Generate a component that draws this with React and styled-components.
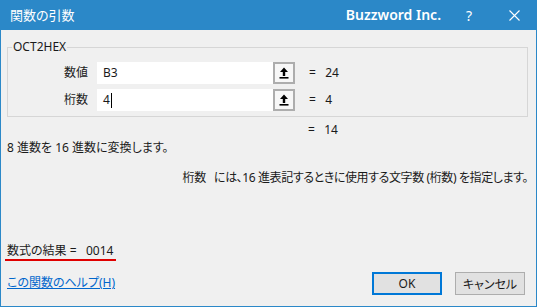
import React from "react";
import styled, { createGlobalStyle } from "styled-components";

const Global = createGlobalStyle`
  html, body { margin: 0; padding: 0; background: #f0f0f0; }
  body {
    font-family: "Noto Sans", "Noto Sans CJK JP", sans-serif;
    font-size: 12px;
    color: #1a1a1a;
    font-feature-settings: "palt";
  }
  * { box-sizing: border-box; }
`;

const BLUE = "#2b88c8";

const Window = styled.div`
  width: 537px;
  height: 307px;
  display: flex;
  flex-direction: column;
  border: 1px solid ${BLUE};
  border-top: none;
  background: #f0f0f0;
`;

const TitleBar = styled.div`
  height: 30px;
  margin: 0 -1px;
  background: ${BLUE};
  color: #fff;
  display: flex;
  align-items: center;
  padding-left: 10px;
  flex-shrink: 0;
`;

const Title = styled.div`
  font-family: "Noto Sans CJK JP", sans-serif;
  font-size: 13px;
  line-height: 16px;
  flex: 1;
`;

const Brand = styled.div`
  font-family: "Noto Sans", sans-serif;
  font-weight: 600;
  font-size: 14px;
  line-height: 18px;
  margin-right: 6px;
`;

const TitleButton = styled.div`
  width: ${(p) => p.$w || 46}px;
  height: 30px;
  display: flex;
  align-items: center;
  justify-content: center;
  font-size: 14px;
  font-family: "Noto Sans", sans-serif;
`;

const Body = styled.div`
  flex: 1;
  display: flex;
  flex-direction: column;
  padding: 9px 8px 0 6px;
`;

const Group = styled.fieldset`
  margin: 0;
  border: 1px solid #d6d6d6;
  padding: 7px 0 5px 0;
  display: flex;
  flex-direction: column;
  gap: 5px;
`;

const Legend = styled.legend`
  font-size: 12px;
  line-height: 16px;
  padding: 0 1px;
  margin-left: 4px;
`;

const Row = styled.div`
  display: flex;
  align-items: center;
  height: 22px;
`;

const Label = styled.div`
  width: 80px;
  text-align: right;
  margin-right: 9px;
  line-height: 16px;
`;

const Input = styled.div`
  width: 176px;
  height: 22px;
  background: #fff;
  display: flex;
  align-items: center;
  padding-left: 6px;
  line-height: 16px;
`;

const Caret = styled.span`
  display: inline-block;
  width: 1px;
  height: 15px;
  background: #000;
  margin-left: 1px;
`;

const RefButton = styled.div`
  width: 22px;
  height: 22px;
  border: 2px solid #adadad;
  background: #f7f7f7;
  display: flex;
  align-items: center;
  justify-content: center;
`;

const Eq = styled.div`
  margin-left: 14px;
  line-height: 16px;
  white-space: pre;
`;

const ResultLine = styled.div`
  margin-top: 5px;
  padding-left: 301px;
  line-height: 16px;
  white-space: pre;
`;

const Text = styled.div`
  margin-top: ${(p) => p.$mt || 0}px;
  line-height: 16px;
  white-space: pre;
  text-align: ${(p) => p.$align || "left"};
  letter-spacing: ${(p) => p.$ls || 0}px;
`;

const Bottom = styled.div`
  margin-top: auto;
  display: flex;
  align-items: flex-end;
  justify-content: space-between;
  padding-bottom: 11px;
`;

const LeftCol = styled.div`
  display: flex;
  flex-direction: column;
  align-items: flex-start;
  padding-bottom: 4px;
`;

const Formula = styled.div`
  line-height: 16px;
  white-space: pre;
  margin-left: -2px;
  padding: 0 3px 0 2px;
  border-bottom: 2px solid #e00000;
`;

const HelpLink = styled.a`
  margin-top: 14px;
  line-height: 16px;
  color: #0066cc;
  text-decoration: underline;
  cursor: pointer;
`;

const Buttons = styled.div`
  display: flex;
  gap: 13px;
  padding-right: 3px;
`;

const DlgButton = styled.button`
  width: 70px;
  height: 23px;
  font-family: "Noto Sans", "Noto Sans CJK JP", sans-serif;
  font-feature-settings: "palt";
  font-size: 12px;
  color: #1a1a1a;
  background: #e1e1e1;
  border: ${(p) => (p.$primary ? "2px solid #0078d7" : "1px solid #adadad")};
  padding: 0;
`;

const ArrowIcon = () => (
  <svg width="10" height="12" viewBox="0 0 10 12">
    <path d="M5 0.5 L9 5 H6.2 V9 H3.8 V5 H1 Z" fill="#000" />
    <rect x="0.5" y="10" width="9" height="1.6" fill="#000" />
  </svg>
);

const CloseIcon = () => (
  <svg width="11" height="11" viewBox="0 0 11 11">
    <path d="M0.5 0.5 L10.5 10.5 M10.5 0.5 L0.5 10.5" stroke="#fff" strokeWidth="1.1" />
  </svg>
);

export default function App() {
  return (
    <>
      <Global />
      <Window>
        <TitleBar>
          <Title>関数の引数</Title>
          <Brand>Buzzword Inc.</Brand>
          <TitleButton $w={44}>?</TitleButton>
          <TitleButton $w={46}>
            <CloseIcon />
          </TitleButton>
        </TitleBar>
        <Body>
          <Group>
            <Legend>OCT2HEX</Legend>
            <Row>
              <Label>数値</Label>
              <Input>B3</Input>
              <RefButton>
                <ArrowIcon />
              </RefButton>
              <Eq>{"=   24"}</Eq>
            </Row>
            <Row>
              <Label>桁数</Label>
              <Input>
                4<Caret />
              </Input>
              <RefButton>
                <ArrowIcon />
              </RefButton>
              <Eq>{"=   4"}</Eq>
            </Row>
          </Group>
          <ResultLine>{"=   14"}</ResultLine>
          <Text $mt={2}>8 進数を 16 進数に変換します。</Text>
          <Text $mt={14} $align="right" $ls={-0.4}>
            {"桁数   には、16 進表記するときに使用する文字数 (桁数) を指定します。"}
          </Text>
          <Bottom>
            <LeftCol>
              <Formula>{"数式の結果 =   0014"}</Formula>
              <HelpLink>この関数のヘルプ(H)</HelpLink>
            </LeftCol>
            <Buttons>
              <DlgButton $primary>OK</DlgButton>
              <DlgButton>キャンセル</DlgButton>
            </Buttons>
          </Bottom>
        </Body>
      </Window>
    </>
  );
}
